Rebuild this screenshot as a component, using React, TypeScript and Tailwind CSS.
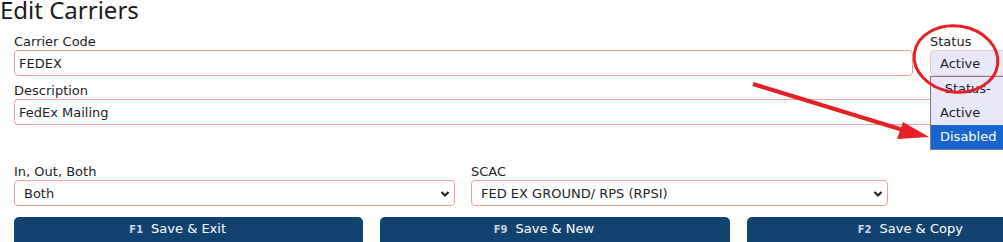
import React from "react";

const Chevron = () => (
  <svg width="10" height="8" viewBox="0 0 10 8" className="shrink-0">
    <polyline points="1.5,2 5,5.5 8.5,2" fill="none" stroke="#222" strokeWidth="2.2" />
  </svg>
);

const Btn = ({ k, label }: { k: string; label: string }) => (
  <div className="h-[30px] rounded-[5px] bg-[#124370] flex items-start justify-center pt-[4px] pr-[22px]">
    <span className="flex items-baseline leading-[16px]">
      <span className="text-[10px] font-bold text-[#c9d5e2] mr-[8px]">{k}</span>
      <span className="text-[13px] text-white">{label}</span>
    </span>
  </div>
);

export default function App() {
  return (
    <div className="relative w-[1003px] h-[242px] overflow-hidden bg-white font-['DejaVu_Sans',sans-serif] text-[13px] text-[#1e1e1e]">
      <h1 className="font-['Noto_Sans',sans-serif] text-[24px] leading-[24px] -mt-[2px] text-[#1b1b1b]">
        Edit Carriers
      </h1>
      <div className="pl-[14px] w-[1300px]">
        <div className="flex gap-[17px] mt-[12px]">
          <div className="w-[899px]">
            <div className="h-[16px] leading-[15px]">Carrier Code</div>
            <div className="h-[26px] border border-[#ef9f98] rounded-[4px] pl-[4px] pt-[2px] flex items-center">FEDEX</div>
          </div>
          <div className="w-[100px]">
            <div className="h-[16px] leading-[15px]">Status</div>
            <div className="relative h-[26px] border border-[#f1c9c5] rounded-[4px] bg-[#e8e8f8] pl-[9px] pt-[2px] flex items-center">
              Active
              <div className="absolute left-[-1px] top-full mt-[1px] w-[110px] border border-[#7c7a8c] bg-[#e8e8f8] z-10">
                <div className="h-[24px] flex items-center pl-[9px]">-Status-</div>
                <div className="h-[24px] flex items-center pl-[9px]">Active</div>
                <div className="h-[24px] flex items-center pl-[9px] bg-[#1766d0] text-white">Disabled</div>
              </div>
            </div>
          </div>
        </div>
        <div className="mt-[7px]">
          <div className="h-[16px] leading-[15px]">Description</div>
          <div className="w-[1100px] h-[26px] border border-[#ef9f98] rounded-[4px] pl-[4px] pt-[2px] flex items-center">FedEx Mailing</div>
        </div>
        <div className="flex gap-[16px] mt-[39px]">
          <div className="w-[441px]">
            <div className="h-[16px] leading-[15px]">In, Out, Both</div>
            <div className="h-[26px] border border-[#ef9f98] rounded-[4px] pl-[9px] pr-[4px] pt-[2px] flex items-center justify-between">
              <span>Both</span>
              <Chevron />
            </div>
          </div>
          <div className="w-[417px]">
            <div className="h-[16px] leading-[15px]">SCAC</div>
            <div className="h-[26px] border border-[#ef9f98] rounded-[4px] pl-[9px] pr-[4px] pt-[2px] flex items-center justify-between">
              <span>FED EX GROUND/ RPS (RPSI)</span>
              <Chevron />
            </div>
          </div>
        </div>
        <div className="grid grid-cols-3 gap-[17px] w-[1082px] mt-[11px]">
          <Btn k="F1" label="Save & Exit" />
          <Btn k="F9" label="Save & New" />
          <Btn k="F2" label="Save & Copy" />
        </div>
      </div>
      <svg className="absolute inset-0 pointer-events-none z-20" width="1003" height="242">
        <ellipse cx="956" cy="59" rx="42" ry="33" fill="none" stroke="#e41f26" strokeWidth="3" transform="rotate(8 956 59)" />
        <line x1="753" y1="84" x2="903" y2="130" stroke="#e41f26" strokeWidth="4" />
        <polygon points="903,122 897,139 929,137" fill="#e41f26" />
      </svg>
    </div>
  );
}
